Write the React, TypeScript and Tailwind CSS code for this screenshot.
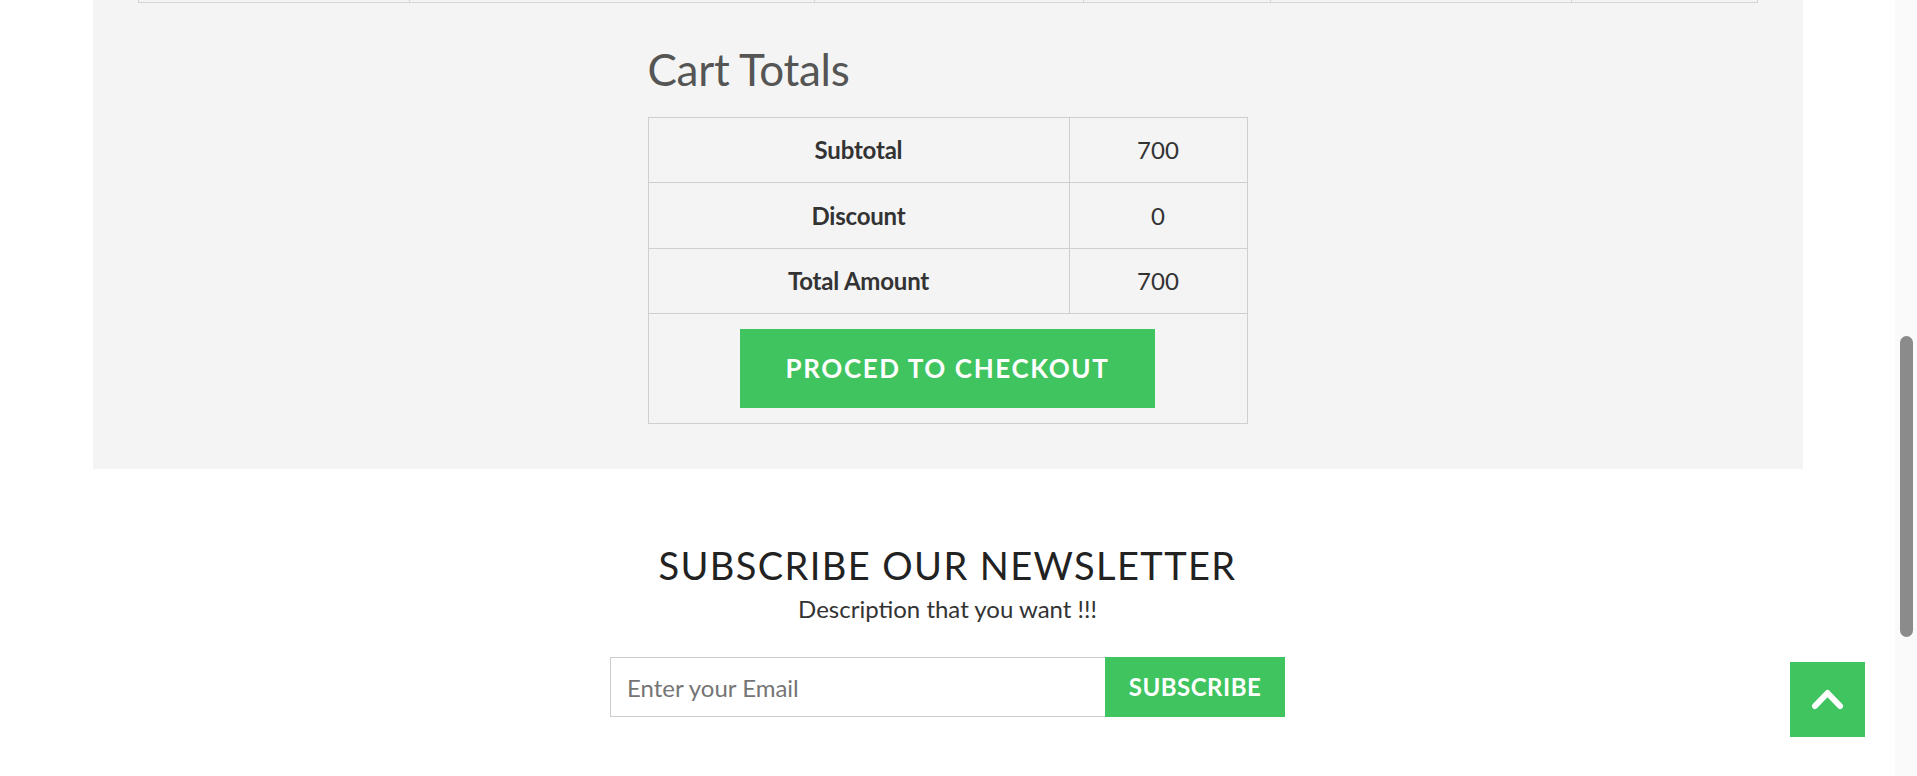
import { useState } from "react";

const topCols = [271, 405, 269, 187, 301, 187];

const totals = [
  { label: "Subtotal", value: "700", h: "h-[64px]" },
  { label: "Discount", value: "0", h: "h-[65px]" },
  { label: "Total Amount", value: "700", h: "h-[64px]" },
];

function CartTotals() {
  return (
    <div className="w-[600px] mx-auto">
      <h2 className="mt-[41px] mb-[23px] text-[44px] leading-[50px] text-[#555] font-normal tracking-[-0.3px]">
        Cart Totals
      </h2>

      <div className="border border-[#cfcfcf] text-[#333]">
        {totals.map((row) => (
          <div key={row.label} className="flex border-b border-[#cfcfcf]">
            <div
              className={`${row.h} w-[421px] flex items-center justify-center border-r border-[#cfcfcf] font-bold text-[24px] tracking-[-0.2px]`}
            >
              {row.label}
            </div>
            <div className={`${row.h} flex-1 flex items-center justify-center text-[24px]`}>
              {row.value}
            </div>
          </div>
        ))}
        <div className="h-[109px] flex items-start justify-center pt-[15px]">
          <button className="w-[415px] h-[79px] bg-[#40c460] text-white font-bold text-[26px] tracking-[1.6px]">
            PROCED TO CHECKOUT
          </button>
        </div>
      </div>
    </div>
  );
}

function Newsletter() {
  const [email, setEmail] = useState("");

  return (
    <div className="flex flex-col items-center pt-[73px]">
      <h2 className="text-[38px] leading-[46px] text-[#222] tracking-[1.4px]">
        SUBSCRIBE OUR NEWSLETTER
      </h2>
      <p className="text-[24px] leading-[28px] text-[#333] mt-[7px]">
        Description that you want !!!
      </p>
      <div className="flex mt-[34px]">
        <input
          type="text"
          value={email}
          placeholder="Enter your Email"
          onChange={(e) => setEmail(e.target.value)}
          className="w-[495px] h-[60px] border border-[#cccccc] border-r-0 px-[16px] text-[24px] text-[#333] placeholder:text-[#757575] outline-none"
        />
        <button className="w-[180px] h-[60px] bg-[#40c460] text-white font-bold text-[24px] tracking-[0.5px]">
          SUBSCRIBE
        </button>
      </div>
    </div>
  );
}

export default function App() {
  return (
    <div
      className="h-screen flex overflow-hidden bg-white"
      style={{ fontFamily: "Lato, 'Open Sans', sans-serif" }}
    >
      <div className="flex-1">
        <div className="w-[1710px] mx-auto bg-[#f4f4f4] pb-[45px]">
          {/* bottom edge of the cart table above */}
          <div className="ml-[45px] w-[1620px] flex">
            {topCols.map((w, i) => (
              <div
                key={i}
                style={{ width: w }}
                className="h-[3px] border-l border-b border-[#d6d6d6] last:border-r"
              />
            ))}
          </div>
          <CartTotals />
        </div>
        <Newsletter />
      </div>

      {/* page scrollbar */}
      <div className="w-[22px] bg-[#fafafa] pt-[336px]">
        <div className="ml-[5px] w-[13px] h-[301px] rounded-full bg-[#8b8b8b]" />
      </div>

      <button className="fixed left-[1790px] top-[662px] w-[75px] h-[75px] bg-[#40c460] flex items-center justify-center">
        <svg width="75" height="75" viewBox="0 0 75 75">
          <polyline
            points="25,44 37.5,31 50,44"
            fill="none"
            stroke="white"
            strokeWidth="6"
            strokeLinecap="round"
            strokeLinejoin="round"
          />
        </svg>
      </button>
    </div>
  );
}
